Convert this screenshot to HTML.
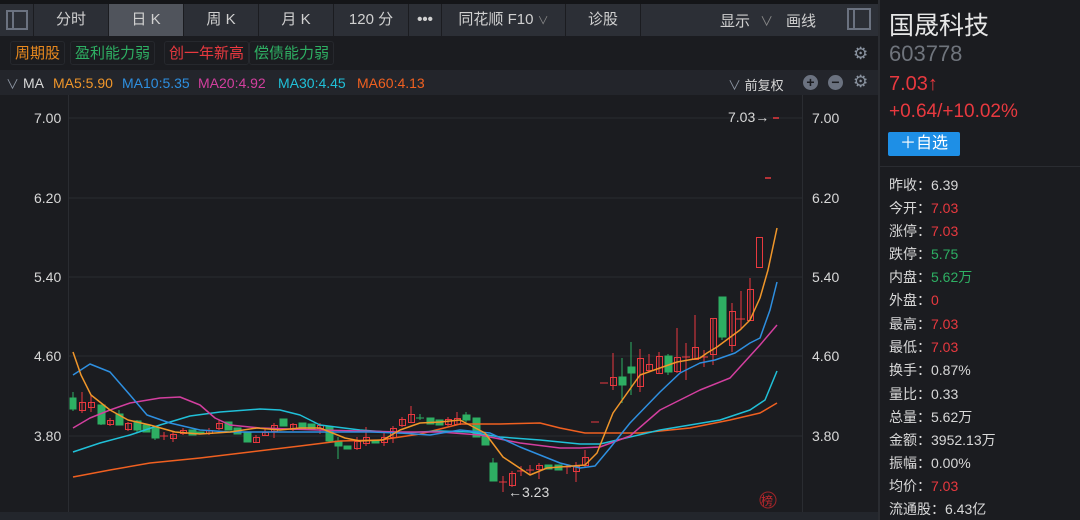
<!DOCTYPE html>
<html><head><meta charset="utf-8"><style>
*{margin:0;padding:0;box-sizing:border-box}
body{width:1080px;height:520px;background:#1b1c20;font-family:"Liberation Sans","Noto Sans CJK SC",sans-serif;color:#d8d8d8;position:relative;overflow:hidden}
.a{position:absolute;white-space:nowrap}
.tab{position:absolute;top:4px;height:32px;background:#2c2f36;border-right:1px solid #1b1c20;color:#d0d0d0;font-size:15px;line-height:32px;text-align:center}
.chip{position:absolute;top:41px;height:24px;line-height:24px;font-size:15px;padding:0 4px;border:1px solid #26282d;border-radius:3px}
.r{color:#e8393f}.g{color:#2eaf63}
.row{position:absolute;left:889px;font-size:14px;color:#d8d8d8}
</style></head><body>
<div class="a" style="left:0;top:0;width:878px;height:4px;background:#141518"></div>
<div class="tab" style="left:0;width:34px"><div style="position:absolute;left:6px;top:6px;width:22px;height:20px;border:2px solid #6b7280"><div style="position:absolute;left:4px;top:0;width:2px;height:16px;background:#6b7280"></div></div></div>
<div class="tab" style="left:34px;width:75px">分时</div>
<div class="tab" style="left:109px;width:75px;background:#50545c">日 K</div>
<div class="tab" style="left:184px;width:75px">周 K</div>
<div class="tab" style="left:259px;width:75px">月 K</div>
<div class="tab" style="left:334px;width:75px">120 分</div>
<div class="tab" style="left:409px;width:33px;font-weight:bold">•••</div>
<div class="tab" style="left:442px;width:124px">同花顺 F10 <span style="font-size:11px;color:#888">∨</span></div>
<div class="tab" style="left:566px;width:75px">诊股</div>
<div class="tab" style="left:641px;width:237px;border:none"></div>
<div class="a" style="left:720px;top:10px;font-size:15px;color:#d0d0d0">显示 <span style="color:#888;font-size:13px;margin-left:6px">∨</span></div>
<div class="a" style="left:786px;top:10px;font-size:15px;color:#d0d0d0">画线</div>
<div class="a" style="left:847px;top:8px;width:24px;height:22px;border:2px solid #6b7280"><div style="position:absolute;left:4px;top:0;width:2px;height:18px;background:#6b7280"></div></div>

<div class="chip" style="left:10px;color:#e8891e">周期股</div>
<div class="chip" style="left:70px;color:#2eaf63">盈利能力弱</div>
<div class="chip" style="left:164px;color:#e8393f">创一年新高</div>
<div class="chip" style="left:249px;color:#2eaf63">偿债能力弱</div>
<div class="a" style="left:853px;top:44px;color:#8a93a0;font-size:17px">⚙</div>

<div class="a" style="left:0;top:70px;width:878px;height:25px;background:#23252b"></div>
<div class="a" style="left:6px;top:74px;font-size:13px;color:#8a93a0">∨</div>
<div class="a" style="left:23px;top:75px;font-size:14px;color:#d8d8d8">MA</div>
<div class="a" style="left:53px;top:75px;font-size:14px;color:#f0962a">MA5:5.90</div>
<div class="a" style="left:122px;top:75px;font-size:14px;color:#2e8fe0">MA10:5.35</div>
<div class="a" style="left:198px;top:75px;font-size:14px;color:#d33f9f">MA20:4.92</div>
<div class="a" style="left:278px;top:75px;font-size:14px;color:#20c0d8">MA30:4.45</div>
<div class="a" style="left:357px;top:75px;font-size:14px;color:#f06020">MA60:4.13</div>
<div class="a" style="left:728px;top:75px;font-size:13px;color:#d8d8d8"><span style="color:#8a93a0">∨</span> 前复权</div>
<div class="a" style="left:803px;top:75px;width:15px;height:15px;border-radius:50%;background:#6b7280;color:#1b1c20;font-size:14px;line-height:15px;text-align:center;font-weight:bold">+</div>
<div class="a" style="left:828px;top:75px;width:15px;height:15px;border-radius:50%;background:#6b7280;color:#1b1c20;font-size:14px;line-height:14px;text-align:center;font-weight:bold">−</div>
<div class="a" style="left:853px;top:72px;color:#8a93a0;font-size:17px">⚙</div>

<svg class="a" style="left:0;top:95px" width="878" height="425" viewBox="0 95 878 425">
<g stroke="#2a2c31" stroke-width="1">
<line x1="68" y1="118" x2="802" y2="118"/><line x1="68" y1="198" x2="802" y2="198"/><line x1="68" y1="277" x2="802" y2="277"/><line x1="68" y1="356" x2="802" y2="356"/><line x1="68" y1="436" x2="802" y2="436"/>
<line x1="68.5" y1="95" x2="68.5" y2="512"/><line x1="802.5" y1="95" x2="802.5" y2="512"/>
</g>
<rect x="0" y="512" width="878" height="8" fill="#23262c"/>
<g font-size="14" fill="#d8d8d8" font-family="Liberation Sans,sans-serif">
<text x="34" y="123">7.00</text><text x="34" y="203">6.20</text><text x="34" y="282">5.40</text><text x="34" y="361">4.60</text><text x="34" y="441">3.80</text>
<text x="812" y="123">7.00</text><text x="812" y="203">6.20</text><text x="812" y="282">5.40</text><text x="812" y="361">4.60</text><text x="812" y="441">3.80</text>
<text x="728" y="122">7.03→</text><text x="508" y="497">←3.23</text>
</g>
<line x1="773" y1="118" x2="779" y2="118" stroke="#e8393f" stroke-width="1.5"/>
<line x1="765" y1="178" x2="771" y2="178" stroke="#e8393f" stroke-width="1.5"/>
<g stroke="#e8393f" stroke-width="1" fill="none">
<path d="M82 392V413M91 395V412M110 418V426M128 422V431M164 432V440M160 436H168M173 432V442M183 428V435M209 428V435M219 420V430M256 435V443M265 429V436M274 423V438M293 423V431M320 423V434M357 437V450M366 427V446M384 431V446M393 426V443M402 417V427M411 406V422M448 417V426M457 412V425M503 476V492M499 482H507M512 471V487M517 471H525M521 466V476M526 470H534M530 465V475M539 463V479M563 467H571M567 464V474M576 462V482M585 450V468M591 422H599M600 383H608M613 353V390M640 349V392M649 354V372M659 352V374M677 328V373M682 357H690M686 343V380M695 315V360M700 357H708M704 350V367M713 318V365M732 303V352M736 319H745M741 291V330M750 278V320"/>
<rect x="79.5" y="402.5" width="6" height="8"/><rect x="88.5" y="402.5" width="6" height="5"/><rect x="107.5" y="420.5" width="6" height="4"/><rect x="125.5" y="423.5" width="6" height="6"/><rect x="170.5" y="434.5" width="6" height="4"/><rect x="180.5" y="430.5" width="6" height="3"/><rect x="206.5" y="430.5" width="6" height="3"/><rect x="216.5" y="423.5" width="6" height="5"/><rect x="253.5" y="437.5" width="6" height="5"/><rect x="262.5" y="432.5" width="6" height="3"/><rect x="271.5" y="425.5" width="6" height="6"/><rect x="290.5" y="424.5" width="6" height="5"/><rect x="317.5" y="425.5" width="6" height="3"/><rect x="354.5" y="441.5" width="6" height="7"/><rect x="363.5" y="437.5" width="6" height="6"/><rect x="381.5" y="437.5" width="6" height="5"/><rect x="390.5" y="428.5" width="6" height="9"/><rect x="399.5" y="419.5" width="6" height="6"/><rect x="408.5" y="414.5" width="6" height="8"/><rect x="445.5" y="419.5" width="6" height="5"/><rect x="454.5" y="418.5" width="6" height="6"/><rect x="509.5" y="473.5" width="6" height="12"/><rect x="536.5" y="465.5" width="6" height="4"/><rect x="573.5" y="466.5" width="6" height="5"/><rect x="582.5" y="457.5" width="6" height="8"/><rect x="610.5" y="377.5" width="6" height="8"/><rect x="637.5" y="358.5" width="6" height="28"/><rect x="646.5" y="364.5" width="6" height="6"/><rect x="656.5" y="356.5" width="6" height="17"/><rect x="674.5" y="357.5" width="6" height="14"/><rect x="692.5" y="347.5" width="6" height="12"/><rect x="710.5" y="318.5" width="6" height="36"/><rect x="729.5" y="311.5" width="6" height="34"/><rect x="747.5" y="289.5" width="6" height="31"/><rect x="756.5" y="237.5" width="6" height="30"/>
</g>
<g fill="#2eaf63" stroke="#2eaf63" stroke-width="1">
<path d="M73 392V411M101 405V425M119 410V425M137 420V432M155 427V440M329 427V442M338 437V459M420 414V420M416 418H424M466 412V422M493 458V481M622 358V403M631 342V395M668 354V375M722 297V340" fill="none"/>
<rect x="70" y="398" width="6" height="11"/><rect x="98" y="405" width="7" height="19"/><rect x="116" y="414" width="7" height="11"/><rect x="134" y="421" width="7" height="9"/><rect x="143" y="425" width="7" height="7"/><rect x="152" y="428" width="7" height="10"/><rect x="189" y="430" width="7" height="5"/><rect x="197" y="432" width="7" height="2"/><rect x="225" y="422" width="7" height="8"/><rect x="234" y="428" width="7" height="6"/><rect x="244" y="432" width="7" height="10"/><rect x="280" y="419" width="7" height="7"/><rect x="299" y="423" width="7" height="6"/><rect x="308" y="424" width="7" height="5"/><rect x="326" y="427" width="7" height="14"/><rect x="335" y="441" width="7" height="5"/><rect x="344" y="446" width="7" height="3"/><rect x="372" y="440" width="7" height="3"/><rect x="427" y="418" width="7" height="6"/><rect x="436" y="420" width="7" height="5"/><rect x="463" y="415" width="7" height="5"/><rect x="473" y="418" width="7" height="19"/><rect x="482" y="435" width="7" height="10"/><rect x="490" y="463" width="7" height="18"/><rect x="545" y="465" width="7" height="4"/><rect x="555" y="465" width="7" height="5"/><rect x="619" y="377" width="7" height="8"/><rect x="628" y="367" width="7" height="6"/><rect x="665" y="356" width="7" height="16"/><rect x="719" y="297" width="7" height="40"/>
</g>
<g fill="none" stroke-width="1.5" stroke-linejoin="round">
<polyline stroke="#f06020" points="73,477 110,470 150,463 200,458 250,452 300,446 340,441 380,440 420,434 460,424 500,424 540,423 560,428 585,433 600,433 640,433 690,428 730,420 760,413 777,403"/>
<polyline stroke="#20c0d8" points="73,452 100,443 130,435 160,425 190,416 220,412 260,409 280,410 300,415 320,425 360,430 400,433 440,431 470,432 500,437 540,440 580,444 600,444 630,437 660,430 690,425 720,420 750,410 765,400 777,371"/>
<polyline stroke="#d33f9f" points="73,428 90,418 110,410 130,403 160,398 180,397 200,405 215,418 230,425 260,428 320,430 360,431 400,432 440,432 480,435 520,443 560,448 580,448 600,447 630,436 660,410 700,390 730,378 760,345 777,325"/>
<polyline stroke="#2e8fe0" points="73,375 90,364 110,372 130,395 147,415 170,423 200,430 230,432 270,432 320,432 370,432 400,433 430,435 460,430 490,433 520,447 560,463 580,468 595,466 610,448 630,423 660,392 680,373 700,363 715,360 735,353 750,343 760,338 770,310 777,282"/>
<polyline stroke="#f0962a" points="73,352 81,375 91,395 110,410 128,420 150,425 175,432 200,434 230,432 257,428 280,430 300,428 320,428 345,438 360,441 383,440 400,430 420,423 440,422 460,420 485,433 503,457 530,475 547,468 585,465 597,453 613,413 640,375 677,362 700,358 707,353 717,347 740,330 750,320 760,298 768,270 777,228"/>
</g>
<circle cx="768" cy="500" r="8" fill="none" stroke="#a02428" stroke-width="1"/>
<text x="761" y="505" font-size="12" fill="#c0282e" font-family="Noto Sans CJK SC,sans-serif">榜</text>
</svg>

<div class="a" style="left:878px;top:0;width:202px;height:520px;border-left:2px solid #2a2c31;background:#1b1c20"></div>
<div class="a" style="left:889px;top:6px;font-size:25px;color:#e6e6e6">国晟科技</div>
<div class="a" style="left:889px;top:41px;font-size:22px;color:#6f747c">603778</div>
<div class="a r" style="left:889px;top:73px;font-size:20px">7.03↑</div>
<div class="a r" style="left:889px;top:101px;font-size:19px">+0.64/+10.02%</div>
<div class="a" style="left:888px;top:132px;width:72px;height:24px;background:#1e8fe6;border-radius:2px;color:#fff;font-size:16px;line-height:24px;text-align:center">＋自选</div>
<div class="a" style="left:880px;top:166px;width:200px;height:1px;background:#2a2c31"></div>
<div class="row" style="top:175px">昨收：6.39</div>
<div class="row" style="top:198px">今开：<span class="r">7.03</span></div>
<div class="row" style="top:221px">涨停：<span class="r">7.03</span></div>
<div class="row" style="top:244px">跌停：<span class="g">5.75</span></div>
<div class="row" style="top:267px">内盘：<span class="g">5.62万</span></div>
<div class="row" style="top:290px">外盘：<span class="r">0</span></div>
<div class="row" style="top:314px">最高：<span class="r">7.03</span></div>
<div class="row" style="top:337px">最低：<span class="r">7.03</span></div>
<div class="row" style="top:360px">换手：0.87%</div>
<div class="row" style="top:384px">量比：0.33</div>
<div class="row" style="top:407px">总量：5.62万</div>
<div class="row" style="top:430px">金额：3952.13万</div>
<div class="row" style="top:453px">振幅：0.00%</div>
<div class="row" style="top:476px">均价：<span class="r">7.03</span></div>
<div class="row" style="top:499px">流通股：6.43亿</div>
</body></html>
